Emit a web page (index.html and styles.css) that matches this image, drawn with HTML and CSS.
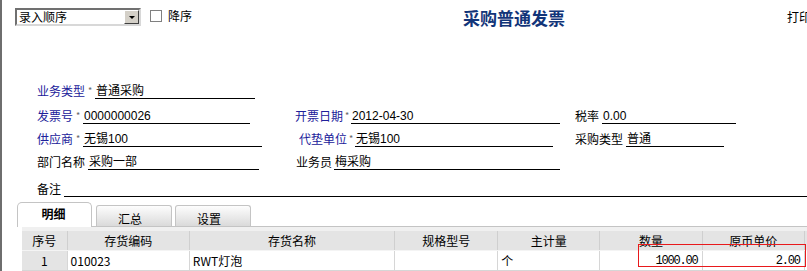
FILE: index.html
```html
<!DOCTYPE html>
<html lang="zh-CN">
<head>
    <meta charset="UTF-8">
    <meta name="viewport" content="width=device-width, initial-scale=1.0">
    <title>采购普通发票</title>
    <link rel="stylesheet" href="styles.css">
</head>
<body>
    <div class="page">
        <div class="toolbar">
            <div class="select">
                <span class="select-text">录入顺序</span>
                <span class="select-btn"></span>
            </div>
            <label class="check"><span class="box"></span>降序</label>
            <h1 class="title">采购普通发票</h1>
            <span class="print">打印</span>
        </div>

        <div class="form">
            <div class="row r1">
                <div class="cell">
                    <span class="label req">业务类型</span><span class="star">*</span>
                    <span class="value w160">普通采购</span>
                </div>
            </div>
            <div class="row r2">
                <div class="cell">
                    <span class="label req">发票号</span><span class="star">*</span>
                    <span class="value w167">0000000026</span>
                </div>
                <div class="cell mid">
                    <span class="label req">开票日期</span><span class="star narrow">*</span>
                    <span class="value w209">2012-04-30</span>
                </div>
                <div class="cell">
                    <span class="label">税率</span>
                    <span class="value gap3 w134">0.00</span>
                </div>
            </div>
            <div class="row r3">
                <div class="cell">
                    <span class="label req">供应商</span><span class="star">*</span>
                    <span class="value w179">无锡100</span>
                </div>
                <div class="cell mid indent4">
                    <span class="label req">代垫单位</span><span class="star narrow">*</span>
                    <span class="value w198">无锡100</span>
                </div>
                <div class="cell">
                    <span class="label">采购类型</span>
                    <span class="value gap3 w98">普通</span>
                </div>
            </div>
            <div class="row r4">
                <div class="cell">
                    <span class="label">部门名称</span>
                    <span class="value gap3 w171">采购一部</span>
                </div>
                <div class="cell mid indent1">
                    <span class="label">业务员</span>
                    <span class="value gap2 w226">梅采购</span>
                </div>
            </div>
            <div class="row r5">
                <span class="label">备注</span>
                <span class="value gap3 fill"></span>
            </div>
        </div>

        <div class="tabs">
            <div class="tab active">明细</div>
            <div class="tab">汇总</div>
            <div class="tab">设置</div>
        </div>

        <div class="panel">
            <table class="grid">
                <colgroup>
                    <col class="c45">
                    <col class="c122">
                    <col class="c205">
                    <col class="c103">
                    <col class="c102">
                    <col class="c102">
                    <col class="c102">
                    <col class="c100">
                </colgroup>
                <tr>
                    <th>序号</th>
                    <th>存货编码</th>
                    <th>存货名称</th>
                    <th>规格型号</th>
                    <th>主计量</th>
                    <th>数量</th>
                    <th>原币单价</th>
                    <th></th>
                </tr>
                <tr>
                    <td class="idx">1</td>
                    <td>010023</td>
                    <td>RWT灯泡</td>
                    <td></td>
                    <td>个</td>
                    <td class="num">1000.00</td>
                    <td class="num">2.00</td>
                    <td></td>
                </tr>
            </table>
            <div class="mark"></div>
        </div>
    </div>
</body>
</html>
```

FILE: styles.css
```css
body {
    margin: 0;
    padding: 0;
    background-color: #fff;
    color: #000;
    font-family: "Noto Sans CJK SC", "Liberation Sans", sans-serif;
    font-size: 12px;
    overflow: hidden;
}

.page {
    height: 271px;
    border-left: 2px solid #6e6e6e;
    overflow: hidden;
}

/* top bar */

.toolbar {
    display: flex;
    align-items: flex-start;
    height: 34px;
}

.select {
    display: flex;
    width: 126px;
    height: 18px;
    margin: 8px 0 0 13px;
    box-sizing: border-box;
    border: 2px solid;
    border-color: #707070 #d8d8d8 #d8d8d8 #707070;
    background-color: #fff;
}

.select-text {
    flex: 1;
    padding-left: 2px;
    line-height: 14px;
}

.select-btn {
    display: flex;
    align-items: center;
    justify-content: center;
    width: 15px;
    height: 14px;
    box-sizing: border-box;
    border: 1px solid;
    border-color: #fff #404040 #404040 #fff;
    background-color: #d4d0c8;
}

.select-btn::after {
    content: "";
    border-left: 3px solid transparent;
    border-right: 3px solid transparent;
    border-top: 3px solid #000;
}

.check {
    display: flex;
    align-items: center;
    margin: 10px 0 0 9px;
    line-height: 12px;
}

.check .box {
    width: 12px;
    height: 12px;
    margin-right: 6px;
    box-sizing: border-box;
    border: 1px solid #808080;
    background-color: #fff;
}

.title {
    margin: 7px 0 0 271px;
    font-size: 17px;
    font-weight: bold;
    line-height: 22px;
    color: #123579;
}

.print {
    margin: 10px -4px 0 auto;
    line-height: 14px;
}

/* header fields */

.form {
    padding: 43px 0 0 35px;
}

.row {
    display: flex;
    align-items: flex-end;
}

.r1 { height: 22px; }
.r2 { height: 25px; }
.r3 { height: 23px; }
.r4 { height: 23px; }
.r5 { height: 27px; }

.cell {
    display: flex;
    flex: none;
    align-items: flex-end;
    width: 258px;
}

.cell.mid {
    width: 280px;
}

.indent4 { padding-left: 4px; box-sizing: border-box; }
.indent1 { padding-left: 1px; box-sizing: border-box; }

.label {
    padding-bottom: 1px;
    line-height: 14px;
    white-space: nowrap;
}

.label.req {
    color: #20209a;
}

.star {
    width: 10px;
    padding-bottom: 2px;
    font-size: 9px;
    line-height: 13px;
    color: #666;
    text-align: center;
}

.star.narrow {
    width: 8px;
}

.value {
    padding-left: 1px;
    box-sizing: border-box;
    border-bottom: 1px solid #000;
    line-height: 14px;
    min-height: 15px;
    font-family: "Liberation Sans", "Noto Sans CJK SC", sans-serif;
    white-space: nowrap;
}

.gap2 { margin-left: 2px; }
.gap3 { margin-left: 3px; }

.w98 { width: 98px; }
.w134 { width: 134px; }
.w160 { width: 160px; }
.w167 { width: 167px; }
.w171 { width: 171px; }
.w179 { width: 179px; }
.w198 { width: 198px; }
.w209 { width: 209px; }
.w226 { width: 226px; }

.fill {
    flex: 1;
}

/* tabs */

.tabs {
    display: flex;
    align-items: flex-end;
    height: 29px;
    padding-left: 15px;
}

.tab {
    width: 76px;
    height: 21px;
    margin-left: 4px;
    padding: 6px 8px 0 0;
    box-sizing: border-box;
    border: 1px solid #c4c4c4;
    border-bottom: none;
    border-radius: 3px 3px 0 0;
    background: linear-gradient(#fdfdfd, #dadada);
    line-height: 14px;
    text-align: center;
}

.tab:last-child {
    margin-left: 3px;
}

.tab.active {
    position: relative;
    z-index: 1;
    width: 75px;
    height: 25px;
    margin: 0 0 -1px 0;
    padding: 4px 2px 0 0;
    border-radius: 5px 5px 0 0;
    background: #fff;
    font-weight: bold;
}

/* detail grid */

.panel {
    position: relative;
    margin-left: 20px;
    padding-top: 4px;
    border-top: 1px solid #c4c4c4;
    background-color: #f0f0f0;
}

.grid {
    width: 883px;
    border-collapse: collapse;
    table-layout: fixed;
}

.c45 { width: 45px; }
.c100 { width: 100px; }
.c102 { width: 102px; }
.c103 { width: 103px; }
.c122 { width: 122px; }
.c205 { width: 205px; }

.grid th {
    height: 19px;
    padding: 0;
    border-right: 1px solid #cfcfcf;
    border-bottom: 1px solid #f4f4f4;
    background-color: #e4e4e4;
    font-weight: normal;
    line-height: 14px;
}

.grid td {
    height: 19px;
    padding: 0 3px;
    border-right: 1px solid #d6d6d6;
    border-bottom: 1px solid #d6d6d6;
    background-color: #fff;
    line-height: 14px;
    white-space: nowrap;
    overflow: hidden;
}

.grid td.idx {
    background-color: #e4e4e4;
    text-align: center;
}

.grid td.num {
    padding-right: 4px;
    font-family: "Liberation Mono", monospace;
    font-size: 12px;
    letter-spacing: -1.2px;
    text-align: right;
}

.mark {
    position: absolute;
    left: 616px;
    top: 17px;
    width: 168px;
    height: 23px;
    box-sizing: border-box;
    border: 1px solid #e8191c;
}
```
